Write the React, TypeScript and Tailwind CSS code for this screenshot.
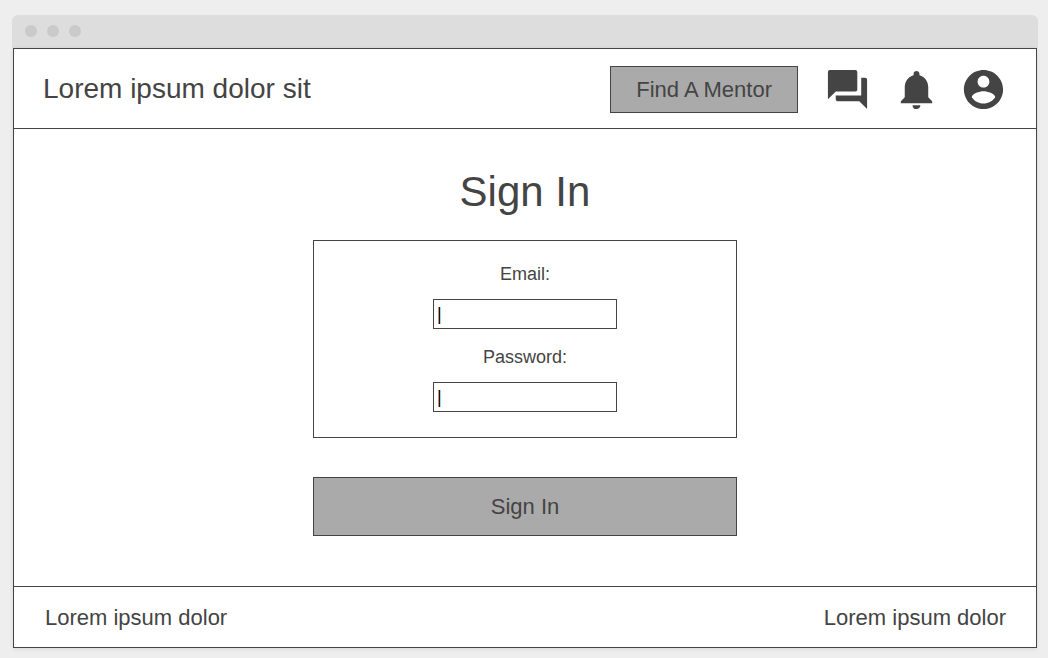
import { MdForum, MdNotifications } from "react-icons/md";

function AccountIcon() {
  return (
    <svg viewBox="0 0 24 24" fill="currentColor" aria-hidden="true" className="size-[47px]">
      <path d="M12 2C6.48 2 2 6.48 2 12s4.48 10 10 10 10-4.48 10-10S17.52 2 12 2zm0 3c1.66 0 3 1.34 3 3s-1.34 3-3 3-3-1.34-3-3 1.34-3 3-3zm0 14.2c-2.5 0-4.71-1.28-6-3.22.03-1.99 4-3.08 6-3.08 1.99 0 5.97 1.09 6 3.08-1.29 1.94-3.5 3.22-6 3.22z" />
    </svg>
  );
}

function TitleBar() {
  return (
    <div className="flex h-[33px] shrink-0 items-start gap-2.5 rounded-t-md bg-[#dddddd] px-[13px] pt-2.5">
      <span className="size-3 rounded-full bg-[#cacaca]" />
      <span className="size-3 rounded-full bg-[#cacaca]" />
      <span className="size-3 rounded-full bg-[#cacaca]" />
    </div>
  );
}

function Header() {
  return (
    <header className="flex items-start justify-between border-b border-[#444444] px-[29px] pt-[17px] pb-[15px]">
      <span className="pt-[7px] text-[28px] leading-8">Lorem ipsum dolor sit</span>
      <nav className="flex items-center">
        <button
          type="button"
          className="mr-[26px] h-[47px] border border-[#444444] bg-[#aaaaaa] px-[25px] text-[22px] leading-6"
        >
          Find A Mentor
        </button>
        <button type="button" aria-label="Messages" className="mr-[22px]">
          <MdForum className="size-[47px]" />
        </button>
        <button type="button" aria-label="Notifications" className="mr-5">
          <MdNotifications className="size-[47px]" />
        </button>
        <button type="button" aria-label="Account">
          <AccountIcon />
        </button>
      </nav>
    </header>
  );
}

function Field({ id, label, type }: { id: string; label: string; type: string }) {
  return (
    <div className="flex flex-col items-center gap-[15px]">
      <label htmlFor={id} className="text-[18px] leading-5">
        {label}
      </label>
      <input
        id={id}
        type={type}
        placeholder="|"
        className="h-[30px] w-[184px] border border-[#444444] bg-white px-[3px] text-[18px] leading-5 outline-none placeholder:text-black"
      />
    </div>
  );
}

export default function App() {
  return (
    <div className="flex min-h-screen flex-col bg-[#eeeeee] pt-[15px] pr-2.5 pb-2.5 pl-3 font-['Liberation_Sans',Arial,sans-serif] text-[#444444]">
      <TitleBar />
      <div className="mx-px flex grow flex-col border border-[#444444] bg-white shadow-[0_1px_4px_rgba(0,0,0,0.1)]">
        <Header />
        <main className="flex grow flex-col items-center px-6 pt-[39px] pb-[50px]">
          <h1 className="text-[42px] leading-12">Sign In</h1>
          <form className="mt-6 flex w-full max-w-[424px] flex-col gap-[39px]">
            <div className="flex flex-col gap-[18px] border border-[#444444] pt-[23px] pb-[25px]">
              <Field id="email" label="Email:" type="email" />
              <Field id="password" label="Password:" type="password" />
            </div>
            <button
              type="submit"
              className="h-[59px] border border-[#444444] bg-[#aaaaaa] text-[22px] leading-6"
            >
              Sign In
            </button>
          </form>
        </main>
        <footer className="flex items-center justify-between border-t border-[#444444] pt-[19px] pr-[30px] pb-[17px] pl-[31px] text-[22px] leading-6">
          <span>Lorem ipsum dolor</span>
          <span>Lorem ipsum dolor</span>
        </footer>
      </div>
    </div>
  );
}
